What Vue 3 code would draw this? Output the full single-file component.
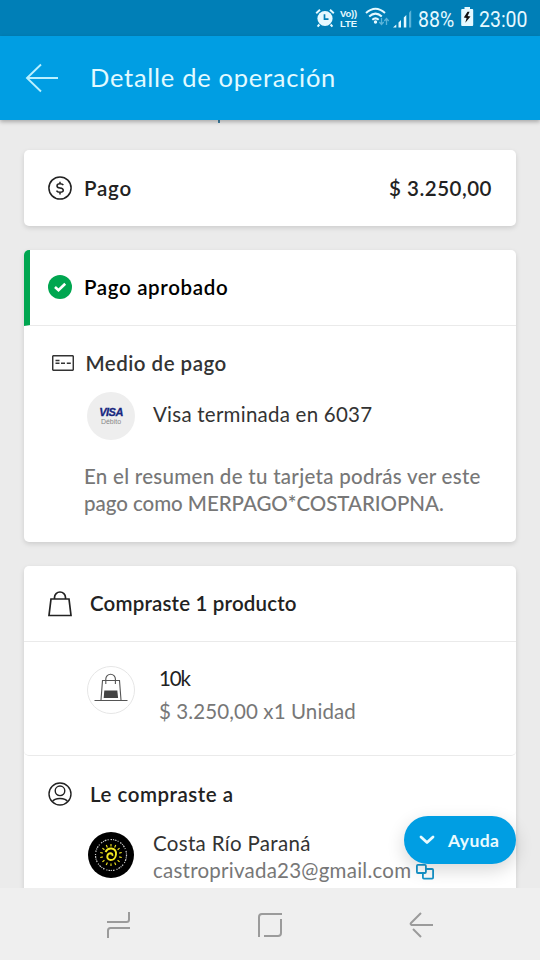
<script setup>
const rays = Array.from({ length: 14 }, (_, i) => i * (360 / 14))
</script>

<template>
  <div class="screen">
    <div class="status">
      <svg class="clock" width="20" height="20" viewBox="0 0 20 20">
        <circle cx="10" cy="10.5" r="7.6" fill="#e6f9ff" />
        <path d="M1.2 5.2 5 1.8M18.8 5.2 15 1.8M4.4 16.5 2.6 18.6M15.6 16.5l1.8 2.1" stroke="#e6f9ff" stroke-width="2" fill="none" />
        <path d="M9.5 6.2v5h4" stroke="#007fb7" stroke-width="1.7" fill="none" />
      </svg>
      <div class="volte"><span class="vo">Vo))</span><span class="lte">LTE</span></div>
      <svg class="wifi" width="25" height="20" viewBox="0 0 25 20">
        <g fill="none" stroke="#e6f9ff" stroke-width="2">
          <path d="M1 6Q10.500-2.500 20 6" /><path d="M4.200 9.500Q10.500 3.800 16.800 9.500" /><path d="M7.300 12.800Q10.500 10 13.700 12.800" />
        </g>
        <circle cx="10.500" cy="15" r="1.700" fill="#e6f9ff" />
        <path d="M16.500 11v6M14.300 15l2.200 2.500 2.200-2.500M21.500 18v-6M19.300 14l2.200-2.500 2.200 2.500" fill="none" stroke="#5bb3d8" stroke-width="1.300" />
      </svg>
      <svg class="signal" width="19" height="19" viewBox="0 0 19 19">
        <path d="M0 18.500 3.300 15.500v3zM5.500 13.500 8 11v7.500H5.500zM10.800 8.500 13.300 6v12.500h-2.500z" fill="#e6f9ff" />
        <path d="M16 3.500 18.200 1.300v17.200H16z" fill="#5bb3d8" />
      </svg>
      <span class="percent">88%</span>
      <svg class="battery" width="13" height="20" viewBox="0 0 13 20">
        <path d="M3.500 0h5.500v2h2.300q.9 0 .9.900v15.200q0 .9-.9.900H1.100q-.9 0-.9-.9V2.900q0-.9.9-.9h2.400z" fill="#e6f9ff" />
        <path d="M6.500 4.800 2.800 10.500l2.800.4-1.300 4.800 5.200-6.200-2.900-.6 2-4.100z" fill="#111" />
      </svg>
      <span class="time">23:00</span>
    </div>

    <header class="header">
      <svg width="34" height="30" viewBox="0 0 34 30"><path d="M33 15H2M16 1.500 2 15l14 13.500" fill="none" stroke="#baf0ff" stroke-width="1.900" /></svg>
      <h1>Detalle de operación</h1>
    </header>

    <main class="content">
      <i class="tail"></i>
      <section class="card total">
        <svg width="24" height="24" viewBox="0 0 24 24" fill="none" stroke="#222" stroke-width="1.500">
          <circle cx="12" cy="12" r="11.100" />
          <path d="M15.300 9.200Q14.600 7.800 12 7.800 9 7.800 9 9.900q0 1.700 3 2.100 3.300.4 3.300 2.300 0 2-3.300 2-2.800 0-3.500-1.700M12 5.700v2.100M12 16.300v2.100" />
        </svg>
        <h2 class="t-pago">Pago</h2>
        <strong class="amount">$ 3.250,00</strong>
      </section>

      <section class="card">
        <div class="approved">
          <svg width="24" height="24" viewBox="0 0 24 24"><circle cx="12" cy="12" r="12" fill="#00a650" /><path d="m7 12 3.500 3.300 6.700-6.600" fill="none" stroke="#fff" stroke-width="2.600" /></svg>
          <h2 class="t-approved">Pago aprobado</h2>
        </div>
        <div class="method">
          <div class="method-title">
            <svg width="22" height="16" viewBox="0 0 22 16" fill="none" stroke="#333">
              <rect x=".7" y=".7" width="20.600" height="14.600" rx="1" stroke-width="1.500" />
              <path d="M3.500 5.500h4M3.500 8.300h4M9 8.300h4M14.800 8.300h4" stroke-width="1.500" />
            </svg>
            <h2 class="t-method">Medio de pago</h2>
          </div>
          <div class="visa-row">
            <div class="visa"><b>VISA</b><small>Débito</small></div>
            <span class="t-visa">Visa terminada en 6037</span>
          </div>
          <p class="note"><span class="n1">En el resumen de tu tarjeta podrás ver este</span><br><span class="n2">pago como MERPAGO*COSTARIOPNA.</span></p>
        </div>
      </section>

      <section class="card purchase">
        <div class="bought">
          <svg width="24" height="26" viewBox="0 0 24 26" fill="none" stroke="#222" stroke-width="1.700"><path d="M3 8h18l2 16.500H1zM6.500 8V6.500a5.500 5.500 0 0 1 11 0V8" /></svg>
          <h2 class="t-bought">Compraste 1 producto</h2>
        </div>
        <div class="product">
          <svg width="48" height="48" viewBox="0 0 48 48" fill="none" stroke="#555">
            <circle cx="24" cy="24" r="23.500" fill="#fff" stroke="#e6e6e6" />
            <path d="M7.500 34.500h33M14 34l1.500-19.500h17L34 34M18.800 18v-5a4.800 4.800 0 0 1 9.600 0v5" stroke-width="1.100" />
            <path d="M17.300 24.500h13l.8 7.500H16.700z" fill="#444" stroke="none" />
          </svg>
          <div><div class="t-name">10k</div><div class="t-qty">$ 3.250,00 x1 Unidad</div></div>
        </div>
        <div class="seller-title">
          <svg width="24" height="24" viewBox="0 0 24 24" fill="none" stroke="#222" stroke-width="1.400"><circle cx="12" cy="12" r="11" /><circle cx="12" cy="8.800" r="4.800" /><path d="M4.300 19.800Q6 16.500 12 16.500t7.700 3.300" /></svg>
          <h2 class="t-seller">Le compraste a</h2>
        </div>
        <div class="seller">
          <svg width="46" height="46" viewBox="0 0 46 46" fill="none">
            <circle cx="23" cy="23" r="23" fill="#000" />
            <circle cx="23" cy="23" r="15.500" stroke="#ccc" stroke-width="1.200" stroke-dasharray="1.500 1 1 .8 1.800 1.200 1 2" />
            <g stroke="#f4e820" stroke-width="1.100">
              <path v-for="r in rays" :key="r" d="M23 12v2.600" :transform="`rotate(${r} 23 23)`" />
            </g>
            <path d="M17.500 20q2-4 6-3.500 5 .8 4.500 6-.7 5.500-5.500 5.500-3.500-.4-3.200-3.800.5-3 3.400-2.900 2.300.5 1.600 2.600" stroke="#f4e820" stroke-width="1.900" />
          </svg>
          <div>
            <div class="t-person">Costa Río Paraná</div>
            <div class="mail">
              <span class="t-mail">castroprivada23@gmail.com</span>
              <svg width="18" height="16" viewBox="0 0 18 16" fill="none" stroke="#1694ca" stroke-width="1.800"><path d="M6.900 9H1.900q-1 0-1-1V1.900q0-1 1-1h7q1 0 1 1V8q0 1-1 1H6.900z" /><path d="M9.900 5h6.200q1 0 1 1v7.600q0 1-1 1H7.900q-1 0-1-1V9" /></svg>
            </div>
          </div>
        </div>
      </section>
    </main>

    <button class="help">
      <svg width="16" height="10" viewBox="0 0 16 10"><path d="m2 2 6 5.500L14 2" fill="none" stroke="#e9fbff" stroke-width="2.800" stroke-linecap="round" stroke-linejoin="round" /></svg>
      <span>Ayuda</span>
    </button>

    <nav class="nav">
      <svg width="24" height="28" viewBox="0 0 24 28"><path d="M0 11h19.500Q22 11 22 8.500V1M1 27v-7.500Q1 17 3.500 17H23" /></svg>
      <svg width="26" height="26" viewBox="0 0 26 26"><path d="M2 25V5Q2 2 5 2h20M24 7v14q0 3-3 3H7" /></svg>
      <svg width="26" height="28" viewBox="0 0 26 28"><path d="M25 14H3.500Q2 13 3 12L13 2M5 18l8 8" /></svg>
    </nav>
  </div>
</template>

<style>
body { margin: 0; }
</style>

<style scoped>
.screen { position: relative; width: 540px; height: 960px; overflow: hidden; display: flex; flex-direction: column; background: #ebebeb; font-family: Lato, "Liberation Sans", sans-serif; color: #222; white-space: nowrap; }
.screen * { box-sizing: border-box; }
svg { display: block; flex: none; }
h1, h2, p { margin: 0; font-weight: 500; }
h2, .amount { font-size: 20.500px; line-height: 28px; font-weight: 600; padding-bottom: 1px; }
.status { flex: none; height: 36px; display: flex; align-items: center; padding-left: 315px; background: #007fb7; color: #e6f9ff; font-family: Roboto, sans-serif; }
.volte { width: 21px; margin: 2px 0 0 5px; display: flex; flex-direction: column; font: 700 9.500px/10px "Liberation Sans", sans-serif; }
.vo { letter-spacing: -.2px; }
.lte { letter-spacing: -.1px; }
.wifi { margin: -3px 0 0 4px; }
.signal { margin-left: 3px; }
.percent, .time { font-size: 22.500px; line-height: 36px; transform: scaleX(.865); transform-origin: left; padding-top: 1px; }
.percent { width: 36px; margin-left: 6px; }
.battery { margin: -3px 0 0 7px; }
.time { margin-left: 5px; }
.header { flex: none; position: relative; z-index: 1; height: 84px; display: flex; align-items: center; gap: 31px; padding-left: 25px; background: #009ee3; box-shadow: 0 2px 4px rgba(0, 0, 0, .28); }
h1 { font-size: 25.500px; color: #e2faff; font-weight: 400; line-height: 34px; letter-spacing: .72px; padding-bottom: 3px; }
.content { flex: 1; min-height: 0; overflow: hidden; padding: 0 24px; display: flex; flex-direction: column; gap: 24px; }
.tail { width: 2px; margin: 0 0 0 194px; background: #3d83a7; flex: none; height: 3px; }
.card { flex: none; background: #fff; border-radius: 5px; box-shadow: 0 2px 5px rgba(0, 0, 0, .13); }
.total { margin-top: 3px; height: 76px; display: flex; align-items: center; gap: 12px; padding: 0 24px; }
.amount { margin-left: auto; letter-spacing: .5px; }
.t-pago { letter-spacing: .8px; }
.approved { height: 76px; display: flex; align-items: center; gap: 12px; padding: 0 0 1px 18px; border-left: 6px solid #00a650; border-top-left-radius: 5px; border-bottom: 1px solid #eaeaea; color: #000; }
.t-approved { letter-spacing: .65px; }
.approved h2 { padding-bottom: 0; }
.method { height: 216px; padding-top: 24px; }
.method-title { display: flex; align-items: center; gap: 12px; height: 28px; padding: 0 0 2px 27.500px; color: #333; }
.method-title h2 { padding: 0; }
.t-method { letter-spacing: .48px; }
.visa-row { display: flex; align-items: center; gap: 18px; padding-left: 63px; margin-top: 14px; }
.visa { width: 48px; height: 48px; border-radius: 50%; background: #eee; display: flex; flex-direction: column; align-items: center; padding-top: 14px; }
.visa b { font: italic 700 11px/12px "Liberation Sans", sans-serif; color: #17277f; letter-spacing: -.5px; -webkit-text-stroke: .3px #17277f; }
.visa small { font: 7px/8px "Liberation Sans", sans-serif; color: #888; margin-top: 0; }
.t-visa { font-size: 20.500px; line-height: 28px; color: #333; padding-bottom: 5px; letter-spacing: .24px; }
.note { padding: 23px 0 0 60px; font-size: 20.500px; line-height: 27px; color: #777; }
.n1 { letter-spacing: .28px; }
.n2 { letter-spacing: -.04px; }
.bought { height: 76px; display: flex; align-items: center; gap: 18px; padding-left: 24px; border-bottom: 1px solid #eaeaea; }
.t-bought { letter-spacing: .17px; }
.product { height: 114px; display: flex; gap: 24px; padding: 24px 0 0 63px; border-bottom: 1px solid #eaeaea; border-radius: 5px; }
.t-name { font-size: 20.500px; line-height: 28px; color: #222; letter-spacing: -1.200px; margin-top: -2px; }
.t-qty { font-size: 20.500px; line-height: 28px; margin-top: 5px; color: #777; letter-spacing: .1px; }
.seller-title { display: flex; align-items: center; gap: 18px; height: 52px; padding: 24px 0 0 24px; }
.t-seller { letter-spacing: .52px; }
.seller { display: flex; align-items: flex-start; gap: 19px; padding: 24px 0 20px 64px; }
.t-person { font-size: 20.500px; line-height: 27px; margin-top: -2px; color: #333; letter-spacing: .32px; }
.mail { display: flex; align-items: center; gap: 5px; }
.mail svg { margin-top: 2px; }
.t-mail { font-size: 20.500px; line-height: 27px; color: #777; letter-spacing: .24px; }
.help { position: absolute; left: 404px; top: 816px; width: 112px; height: 48px; display: flex; align-items: center; gap: 13px; padding: 0 0 0 15px; border: 0; border-radius: 24px; background: #009ee3; color: #e9fbff; font: 700 17.500px Lato, sans-serif; letter-spacing: .4px; box-shadow: 0 6px 18px rgba(0, 0, 0, .16); }
.nav { flex: none; height: 72px; display: flex; align-items: center; justify-content: space-between; padding: 2px 106px 0 107px; background: #efefef; }
.nav path { fill: none; stroke: #9b9b9b; stroke-width: 2; }
</style>
